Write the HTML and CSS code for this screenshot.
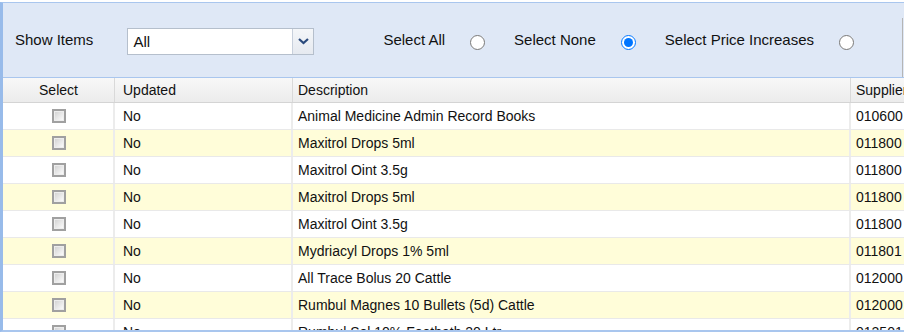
FILE: index.html
```html
<!DOCTYPE html>
<html>
<head>
<meta charset="utf-8">
<link rel="stylesheet" href="styles.css">
</head>
<body>
<div class="frame">
  <div class="toolbar">
    <span class="label">Show Items</span>
    <div class="combo">
      <span class="combo-text">All</span>
      <span class="combo-btn">
        <svg width="11" height="7" viewBox="0 0 11 7"><path d="M1 1 L5.5 5 L10 1" fill="none" stroke="#2b4a7c" stroke-width="2.2"/></svg>
      </span>
    </div>
    <div class="opts">
      <span class="opt"><span class="label">Select All</span><input type="radio" name="sel" class="radio"></span>
      <span class="opt"><span class="label">Select None</span><input type="radio" name="sel" class="radio" checked></span>
      <span class="opt"><span class="label">Select Price Increases</span><input type="radio" name="sel" class="radio"></span>
    </div>
    <div class="edge"></div>
  </div>
  <div class="grid">
    <div class="row head">
      <div class="c c1 ctr">Select</div>
      <div class="c c2">Updated</div>
      <div class="c c3">Description</div>
      <div class="c c4">Supplier Code</div>
    </div>
    <div class="row"><div class="c c1 ctr"><span class="cb"></span></div><div class="c c2">No</div><div class="c c3">Animal Medicine Admin Record Books</div><div class="c c4">010600</div></div>
    <div class="row alt"><div class="c c1 ctr"><span class="cb"></span></div><div class="c c2">No</div><div class="c c3">Maxitrol Drops 5ml</div><div class="c c4">011800</div></div>
    <div class="row"><div class="c c1 ctr"><span class="cb"></span></div><div class="c c2">No</div><div class="c c3">Maxitrol Oint 3.5g</div><div class="c c4">011800</div></div>
    <div class="row alt"><div class="c c1 ctr"><span class="cb"></span></div><div class="c c2">No</div><div class="c c3">Maxitrol Drops 5ml</div><div class="c c4">011800</div></div>
    <div class="row"><div class="c c1 ctr"><span class="cb"></span></div><div class="c c2">No</div><div class="c c3">Maxitrol Oint 3.5g</div><div class="c c4">011800</div></div>
    <div class="row alt"><div class="c c1 ctr"><span class="cb"></span></div><div class="c c2">No</div><div class="c c3">Mydriacyl Drops 1% 5ml</div><div class="c c4">011801</div></div>
    <div class="row"><div class="c c1 ctr"><span class="cb"></span></div><div class="c c2">No</div><div class="c c3">All Trace Bolus 20 Cattle</div><div class="c c4">012000</div></div>
    <div class="row alt"><div class="c c1 ctr"><span class="cb"></span></div><div class="c c2">No</div><div class="c c3">Rumbul Magnes 10 Bullets (5d) Cattle</div><div class="c c4">012000</div></div>
    <div class="row"><div class="c c1 ctr"><span class="cb"></span></div><div class="c c2">No</div><div class="c c3">Rumbul Sol 10% Footbath 20 Ltr</div><div class="c c4">012501</div></div>
  </div>
</div>
</body>
</html>
```

FILE: styles.css
```css
html, body {
  margin: 0;
  padding: 0;
  background: #ffffff;
  overflow: hidden;
}
body {
  font-family: "Liberation Sans", Arial, sans-serif;
  color: #111111;
  width: 904px;
  height: 333px;
}
.frame {
  margin-top: 2px;
  border-top: 1px solid #a9c6ee;
  border-left: 3px solid #98bbea;
  height: 330px;
  overflow: hidden;
  box-sizing: border-box;
  border-bottom: 2px solid #a9c6ee;
}
.toolbar {
  height: 75px;
  background: #dfe8f6;
  border-bottom: 1px solid #a9c6ee;
  display: flex;
  align-items: center;
  padding-left: 12px;
  padding-top: 1px;
  box-sizing: border-box;
  position: relative;
  width: 1100px;
}
.label {
  font-size: 15px;
  line-height: 18px;
  margin-top: -2px;
}
.combo {
  margin-left: 34px;
  width: 187px;
  height: 27px;
  border: 1px solid #b5bfcc;
  background: #ffffff;
  display: flex;
  box-sizing: border-box;
  margin-top: 2px;
}
.combo-text {
  flex: 1;
  font-size: 15px;
  line-height: 26px;
  padding-left: 5px;
}
.combo-btn {
  width: 20px;
  border-left: 1px solid #c8d0dc;
  background: linear-gradient(#f4f6f9, #e6eaf0);
  display: flex;
  align-items: center;
  justify-content: center;
}
.opts {
  display: flex;
  align-items: center;
  margin-left: 69px;
  gap: 29px;
}
.opt {
  display: flex;
  align-items: center;
}
.radio {
  width: 15px;
  height: 15px;
  margin: 3px 0 0 25px;
  accent-color: #0075ff;
}
.edge {
  margin-left: 48px;
  align-self: flex-end;
  height: 59px;
  border-left: 1px solid #b5b5b5;
  width: 100px;
}
.grid {
  width: 1100px;
}
.row {
  display: flex;
  height: 27px;
  border-bottom: 1px solid #e9e9e9;
  box-sizing: border-box;
  font-size: 14px;
}
.row.alt {
  background: #fffdd9;
}
.row.head {
  height: 25px;
  background: linear-gradient(#f8f8f8, #ececec);
  border-bottom: 1px solid #d4d4d4;
}
.c {
  display: flex;
  align-items: center;
  border-right: 2px solid #ececec;
  box-sizing: border-box;
  white-space: nowrap;
  overflow: hidden;
}
.head .c {
  border-right: 1px solid #d9d9d9;
  padding-top: 0;
}
.ctr {
  justify-content: center;
}
.c1 { width: 112px; }
.c2 { width: 178px; padding-left: 8px; }
.c3 { width: 558px; padding-left: 5px; }
.c4 { width: 200px; padding-left: 5px; }
.cb {
  width: 14px;
  height: 14px;
  box-sizing: border-box;
  border: 2px solid #a0a0a0;
  background: linear-gradient(135deg, #cfcfcf, #ffffff);
  box-shadow: inset 0 0 0 1px #ededed;
  margin-left: 2px;
}
```
